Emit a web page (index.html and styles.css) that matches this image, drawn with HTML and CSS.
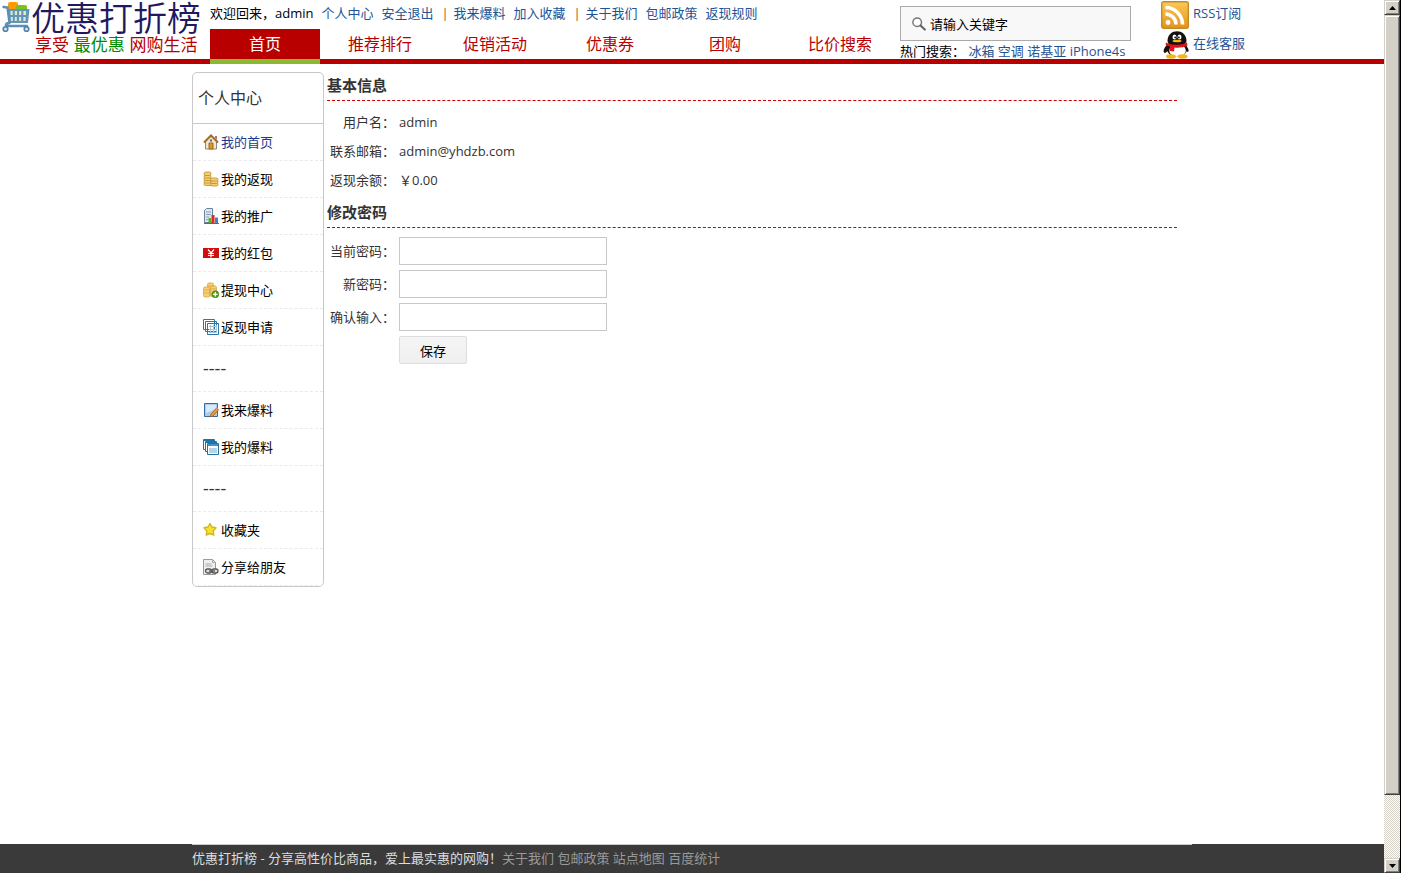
FILE: index.html
```html
<!DOCTYPE html>
<html lang="zh-CN">
<head>
<meta charset="utf-8">
<title>个人中心 - 优惠打折榜</title>
<link rel="stylesheet" href="styles.css">
</head>
<body>
<div class="page">
  <header class="header">
    <a class="logo" href="#">
      <svg class="logo-cart" viewBox="0 0 28 32" aria-hidden="true">
        <path d="M6 8V3q0-2 2-2h6q2 0 2 2v5z" fill="#ff9a00"/>
        <path d="M14 9V6q0-2 2-2h7q2 0 2 2v3z" fill="#7cc21c"/>
        <path d="M5 8h22.500l-1.500 14H7z" fill="#6495b8"/>
        <path d="M8.500 10h2.200v4H8.500zm4.300 0H15v4h-2.200zm4.300 0h2.200v4h-2.200zm4.300 0h2.600v4h-2.600zM8.800 16h2v4h-2zm4 0h2v4h-2zm4.300 0h2v4h-2zm4.300 0h2.200v4h-2.200z" fill="#dbe9d0"/>
        <path d="M1.500 6l4 .5L7.500 22c-3 0-4 1-3.500 3h21" fill="none" stroke="#5b8fb5" stroke-width="2.400" stroke-linecap="round" stroke-linejoin="round"/>
        <circle cx="3.500" cy="28" r="2.300" fill="#d8e4ec" stroke="#4f84aa" stroke-width="1.600"/>
        <circle cx="24.500" cy="28" r="2.300" fill="#d8e4ec" stroke="#4f84aa" stroke-width="1.600"/>
      </svg>
      <span class="logo-text">
        <span class="logo-name">优惠打折榜</span>
        <span class="slogan">享受 <span class="slogan-green">最优惠</span> 网购生活</span>
      </span>
    </a>
    <div class="header-main">
      <div class="top-links">
        <span>欢迎回来<span class="punct">，</span>admin</span>
        <a href="#">个人中心</a><a href="#">安全退出</a>
        <span class="bar">|</span>
        <a href="#">我来爆料</a><a href="#">加入收藏</a>
        <span class="bar">|</span>
        <a href="#">关于我们</a><a href="#">包邮政策</a><a href="#">返现规则</a>
      </div>
      <nav class="nav">
        <a class="nav-item active" href="#">首页</a>
        <a class="nav-item" href="#">推荐排行</a>
        <a class="nav-item" href="#">促销活动</a>
        <a class="nav-item" href="#">优惠券</a>
        <a class="nav-item" href="#">团购</a>
        <a class="nav-item" href="#">比价搜索</a>
      </nav>
    </div>
    <form class="search">
      <label class="search-box">
        <svg class="search-icon" viewBox="0 0 14 14" aria-hidden="true"><circle cx="5.200" cy="5.200" r="4.300" fill="#fff" stroke="#777" stroke-width="1.500"/><path d="M8.500 8.500l4.300 4" stroke="#666" stroke-width="2.200" stroke-linecap="round"/></svg>
        <input class="search-input" type="text" aria-label="搜索" value="请输入关键字">
      </label>
      <p class="hot">热门搜索<span class="punct">：</span> <a href="#">冰箱</a> <a href="#">空调</a> <a href="#">诺基亚</a> <a href="#">iPhone4s</a></p>
    </form>
    <div class="quick">
      <a class="quick-link" href="#">
        <svg class="quick-icon" viewBox="0 0 28 28" aria-hidden="true">
          <defs><linearGradient id="rss" x1="0" y1="0" x2="0" y2="1"><stop offset="0" stop-color="#fbc955"/><stop offset="1" stop-color="#e2941c"/></linearGradient></defs>
          <rect x=".7" y=".7" width="26.600" height="26.600" rx="2" fill="url(#rss)" stroke="#c98a26" stroke-width="1.400"/>
          <circle cx="7" cy="21.500" r="2.400" fill="#fff"/>
          <path d="M4.500 13a10.500 10.500 0 0 1 10.500 10.500M4.500 6.500a17 17 0 0 1 17 17" fill="none" stroke="#fff" stroke-width="3.600"/>
        </svg>RSS订阅</a>
      <a class="quick-link" href="#">
        <svg class="quick-icon" viewBox="0 0 28 28" aria-hidden="true">
          <path d="M8 12C3 16 1 21 4 22l3-2h18l2 1c2-2-1-6-5-9z" fill="#111"/>
          <ellipse cx="16" cy="18" rx="10" ry="8" fill="#111"/>
          <ellipse cx="16.500" cy="19.500" rx="8.300" ry="6.500" fill="#fff"/>
          <ellipse cx="10" cy="25.500" rx="5" ry="2.200" fill="#f6b51c"/><ellipse cx="21.500" cy="25.500" rx="5" ry="2.200" fill="#f6b51c"/>
          <path d="M6.500 10C6.500-3 25.500-3 25.500 10c0 6-19 6-19 0z" fill="#111"/>
          <ellipse cx="13.500" cy="6" rx="2" ry="2.600" fill="#fff"/><ellipse cx="18.500" cy="6" rx="2" ry="2.600" fill="#fff"/>
          <circle cx="14.200" cy="6.500" r=".9" fill="#111"/><circle cx="17.900" cy="6.500" r=".9" fill="#111"/>
          <ellipse cx="16" cy="10" rx="4.500" ry="1.300" fill="#f6b51c"/>
          <path d="M5 11.500c5 3 16 3 21 0l.5 3c-4 2-9 2.500-13 2l-.5 4-4.500-.500.5-4.500c-2-.5-3-1-4.500-2z" fill="#e2101a"/>
        </svg>在线客服</a>
    </div>
  </header>

  <div class="container">
    <aside class="sidebar">
      <h2 class="side-title">个人中心</h2>
      <ul class="menu">
        <li><a class="current" href="#"><svg class="icon" viewBox="0 0 16 16" aria-hidden="true"><path d="M2.500 7v8h11V7L8 2z" fill="#f6e7c4" stroke="#888"/><path d="M1 8.500L8 1.500l7 7" fill="none" stroke="#a5692c" stroke-width="2"/><path d="M12 2h2v4l-2-2z" fill="#a77"/><path d="M6 9h4v6H6z" fill="#d8962f" stroke="#a06a1e"/><path d="M7 5.500h2v2H7z" fill="#2a72b8"/></svg>我的首页</a></li>
        <li><a href="#"><svg class="icon" viewBox="0 0 16 16" aria-hidden="true"><g fill="#f3ce6c" stroke="#bd8d32" stroke-width=".8"><rect x="1" y="11.500" width="8" height="3" rx="1.500"/><rect x="1" y="9" width="7" height="3" rx="1.500"/><rect x="1" y="6.500" width="7" height="3" rx="1.500"/><rect x="1" y="4" width="7" height="3" rx="1.500"/><rect x="1" y="1" width="7" height="3.500" rx="1.700"/><rect x="7.500" y="12" width="7.500" height="3" rx="1.500"/><rect x="7.500" y="9.500" width="7.500" height="3" rx="1.500"/><rect x="7.500" y="7" width="7.500" height="3" rx="1.500"/></g></svg>我的返现</a></li>
        <li><a href="#"><svg class="icon" viewBox="0 0 16 16" aria-hidden="true"><path d="M1.500 14.500v-12l2-2h6v14z" fill="#dce7f1" stroke="#6d8198"/><path d="M3 4h5M3 6.500h5M3 9h3M3 11.500h2" stroke="#87a2bc"/><path d="M5.500 10h2.500v5H5.500z" fill="#5ba92d"/><path d="M8.500 7H11.500V15h-3z" fill="#de2626"/><path d="M12 9.500h3V15h-3z" fill="#3b83cf"/><path d="M1 15.500h15" stroke="#666"/></svg>我的推广</a></li>
        <li><a href="#"><svg class="icon" viewBox="0 0 16 16" aria-hidden="true"><path d="M0 3h16v10H0z" fill="#cf0e0e"/><path d="M5 4.500l3 3.500 3-3.500M8 8v4.500M5 8.500h6M5 10.500h6" fill="none" stroke="#fff" stroke-width="1.200"/></svg>我的红包</a></li>
        <li><a href="#"><svg class="icon" viewBox="0 0 16 16" aria-hidden="true"><g fill="#f8cf72" stroke="#dba347" stroke-width=".8"><rect x="4.500" y="1" width="6" height="13" rx="1.500"/><rect x=".5" y="5" width="6" height="10" rx="1.500"/><rect x="7.500" y="4" width="6" height="10" rx="1.500"/></g><path d="M1 8h5M1 11h5M8 7h5M5 4h5" stroke="#e2aa4a"/><circle cx="12.300" cy="12.300" r="3.500" fill="#4f9f19" stroke="#3b7d10" stroke-width=".6"/><path d="M12.300 10v4.600M10 12.300h4.600" stroke="#fff" stroke-width="1.300"/></svg>提现中心</a></li>
        <li><a href="#"><svg class="icon" viewBox="0 0 16 16" aria-hidden="true"><g fill="#fff" stroke="#2879a8"><path d="M.5 .5h11v10H.5zM2.500 2.500h11v10h-11zM4.500 4.500h11v11h-11z"/></g><path d="M6 7.500h8M6 10.500h8M6 13.500h8M7.500 6v8M10.500 6v8M13.500 6v8" stroke="#a9c6d9"/></svg>返现申请</a></li>
        <li class="divider">----</li>
        <li><a href="#"><svg class="icon" viewBox="0 0 16 16" aria-hidden="true"><path d="M1.500 1.500h13v13h-13z" fill="#a9cdeb" stroke="#336ca4"/><path d="M3 3h10v4L3 11z" fill="#d9eaf7"/><path d="M7 15l1-3 5.500-6 2 2L10 14z" fill="#ef9a27" stroke="#9a5d1c" stroke-width=".7"/><path d="M13 6.500l1.300-1 1.700 1.700-1.200 1.300z" fill="#d38ba0"/></svg>我来爆料</a></li>
        <li><a href="#"><svg class="icon" viewBox="0 0 16 16" aria-hidden="true"><g fill="#fff" stroke="#2273a5"><path d="M.5 .5h11v10H.5z"/><path d="M1 1.500h10"/><path d="M2.500 2.500h11v10h-11z"/><path d="M3 3.500h10"/><path d="M4.500 4.500h11v11h-11z"/></g><path d="M5 5h10v2H5z" fill="#3d94c6"/><path d="M6 9h8v5H6z" fill="#b5d6e8"/></svg>我的爆料</a></li>
        <li class="divider">----</li>
        <li><a href="#"><svg class="icon" viewBox="0 0 16 16" aria-hidden="true"><path d="M7 1.500l2 3.500 4 .8-2.800 3.200.6 4L7 11.500 3.200 13l.6-4L1 5.800 5 5z" fill="#f6e22e" stroke="#d3b424" stroke-width="1.400" stroke-linejoin="round"/></svg>收藏夹</a></li>
        <li><a href="#"><svg class="icon" viewBox="0 0 16 16" aria-hidden="true"><path d="M.5 .5h9l3 3v12H.5z" fill="#efefef" stroke="#999"/><path d="M9.500 .5v3h3M2.500 5h6M2.500 7h7" fill="none" stroke="#aaa"/><g fill="#ddd" stroke="#555" stroke-width="1.300"><rect x="2.500" y="10" width="6" height="4" rx="2"/><rect x="9" y="10" width="6" height="4" rx="2"/></g><path d="M6 12h6" stroke="#555" stroke-width="1.300"/></svg>分享给朋友</a></li>
      </ul>
    </aside>

    <main class="content">
      <h2 class="section-title">基本信息</h2>
      <dl class="info">
        <dt>用户名<span class="punct">：</span></dt><dd>admin</dd>
        <dt>联系邮箱<span class="punct">：</span></dt><dd>admin@yhdzb.com</dd>
        <dt>返现余额<span class="punct">：</span></dt><dd>￥0.00</dd>
      </dl>
      <h2 class="section-title">修改密码</h2>
      <form class="password-form">
        <label for="old">当前密码<span class="punct">：</span></label><input class="field" id="old" type="password">
        <label for="new">新密码<span class="punct">：</span></label><input class="field" id="new" type="password">
        <label for="again">确认输入<span class="punct">：</span></label><input class="field" id="again" type="password">
        <button class="save" type="button">保存</button>
      </form>
    </main>
  </div>

  <footer class="footer">
    <div class="footer-inner">优惠打折榜 - 分享高性价比商品<span class="punct">，</span>爱上最实惠的网购<span class="punct">！</span><a href="#">关于我们</a> <a href="#">包邮政策</a> <a href="#">站点地图</a> <a href="#">百度统计</a></div>
  </footer>
</div>
<div class="scrollbar">
  <button class="scroll-button" type="button" aria-label="向上滚动"><svg class="arrow" viewBox="0 0 7 4" aria-hidden="true"><path d="M0 4h7L3.500 0z"/></svg></button>
  <div class="thumb"></div>
  <div class="track"></div>
  <button class="scroll-button" type="button" aria-label="向下滚动"><svg class="arrow" viewBox="0 0 7 4" aria-hidden="true"><path d="M0 0h7L3.500 4z"/></svg></button>
</div>
</body>
</html>
```
FILE: styles.css
```css
* { box-sizing: border-box; }

body {
  margin: 0;
  display: flex;
  min-height: 100vh;
  background: #fff;
  color: #333;
  font: 13px/20px "Open Sans", "Noto Sans CJK SC", sans-serif;
}

a { color: #1e5494; text-decoration: none; }
input, button { font: inherit; }
h2, p, ul, dl, dd { margin: 0; padding: 0; }

/* Full-width punctuation sits in the middle of its cell */
.punct { font-family: "Noto Sans CJK TC", sans-serif; line-height: 1; }

.page {
  flex: 1;
  min-width: 0;
  display: flex;
  flex-direction: column;
}

/* Header */
.header {
  display: flex;
  color: #000;
  white-space: nowrap;
  background: linear-gradient(#b90000, #b90000) left bottom / 100% 5px no-repeat;
}
.logo {
  display: flex;
  width: 210px;
  padding: 1px 0 0 2px;
  font-family: "Liberation Sans", "Noto Sans CJK SC", sans-serif;
}
.logo-cart { width: 28px; height: 32px; }
.logo-text { display: flex; flex-direction: column; padding-left: 1px; }
.logo-name { font-size: 34px; line-height: 36px; font-weight: 350; color: #1f1a5f; }
.slogan { padding-left: 4px; font-size: 17px; line-height: 18px; color: #b90000; }
.slogan-green { color: #008a00; }

.top-links { display: flex; gap: 8px; height: 29px; line-height: 27px; }
.bar { width: 4px; color: #a0522d; }
.nav { display: flex; gap: 5px; }
.nav-item {
  width: 110px;
  border-bottom: 5px solid transparent;
  font-size: 16px;
  line-height: 30px;
  text-align: center;
  color: #b90000;
}
.nav-item.active {
  background: #b90000;
  border-color: #8aba32;
  color: #fff;
}

.search { width: 231px; margin-left: 5px; padding-top: 6px; }
.search-box {
  display: flex;
  align-items: center;
  gap: 4px;
  height: 35px;
  padding: 0 11px;
  border: 1px solid #aaa;
  background: #f8f8f8;
}
.search-icon { width: 14px; height: 14px; }
.search-input {
  flex: 1;
  min-width: 0;
  padding: 0;
  border: 0;
  background: none;
  color: #000;
}
.hot { line-height: 20px; }

.quick { display: flex; flex-direction: column; gap: 2px; margin-left: 30px; padding-top: 1px; }
.quick-link { display: flex; gap: 4px; line-height: 24px; }
.quick-icon { width: 28px; height: 28px; }

/* Body columns */
.container {
  flex: 1;
  display: flex;
  align-items: flex-start;
  gap: 3px;
  width: 100%;
  max-width: 1000px;
  margin: 0 auto;
  padding: 8px 15px 8px 0;
}
.sidebar { width: 132px; border: 1px solid #c8c8c8; border-radius: 5px; }
.side-title {
  padding-left: 5px;
  border-bottom: 1px solid #c8c8c8;
  font-size: 16px;
  font-weight: 400;
  line-height: 50px;
}
.menu { list-style: none; }
.menu li { border-bottom: 1px dashed #eaeaea; }
.menu a {
  display: flex;
  align-items: center;
  gap: 2px;
  height: 36px;
  padding-left: 10px;
  color: #000;
}
.menu .current { color: #1a3a8f; }
.icon { width: 16px; height: 16px; }
.menu .divider { padding-left: 10px; line-height: 45px; font-size: 18px; }

.content { flex: 1; min-width: 0; }
.section-title {
  padding-bottom: 2px;
  border-bottom: 1px dashed #c00;
  font-size: 15px;
  line-height: 26px;
}
.info {
  display: grid;
  grid-template-columns: 68px 1fr;
  column-gap: 4px;
  padding: 7px 0 4px;
  line-height: 29px;
}
.info dt, .password-form label { text-align: right; }
.password-form {
  display: grid;
  grid-template-columns: 68px 208px;
  gap: 5px 4px;
  padding-top: 9px;
  line-height: 28px;
}
.field { height: 28px; padding: 0 4px; border: 1px solid #c8c8c8; background: #fff; }
.save {
  grid-column: 2;
  width: 68px;
  height: 28px;
  padding: 0 0 2px;
  border: 1px solid #ddd;
  border-radius: 2px;
  background: linear-gradient(#f5f5f5, #efefef);
  color: #000;
}

/* Footer */
.footer { background: #3a3a3a; color: #ddd; }
.footer-inner {
  max-width: 1000px;
  margin: 0 auto;
  padding-bottom: 2px;
  border-top: 1px solid #ccc;
  line-height: 26px;
}
.footer a { color: #999; }

/* Window scroll bar */
.scrollbar {
  display: flex;
  flex-direction: column;
  width: 17px;
  border-right: 1px solid #000;
  background: repeating-conic-gradient(#fff 0 25%, #d4d0c8 0 50%) 0 0 / 2px 2px;
}
.scroll-button, .thumb {
  border: 1px solid;
  border-color: #d4d0c8 #404040 #404040 #d4d0c8;
  background: #d4d0c8;
  box-shadow: inset 1px 1px #fff, inset -1px -1px #808080;
}
.scroll-button {
  display: flex;
  align-items: center;
  justify-content: center;
  height: 15px;
  padding: 0;
}
.arrow { width: 7px; height: 4px; }
.thumb { flex: 780; }
.track { flex: 63; }
```
